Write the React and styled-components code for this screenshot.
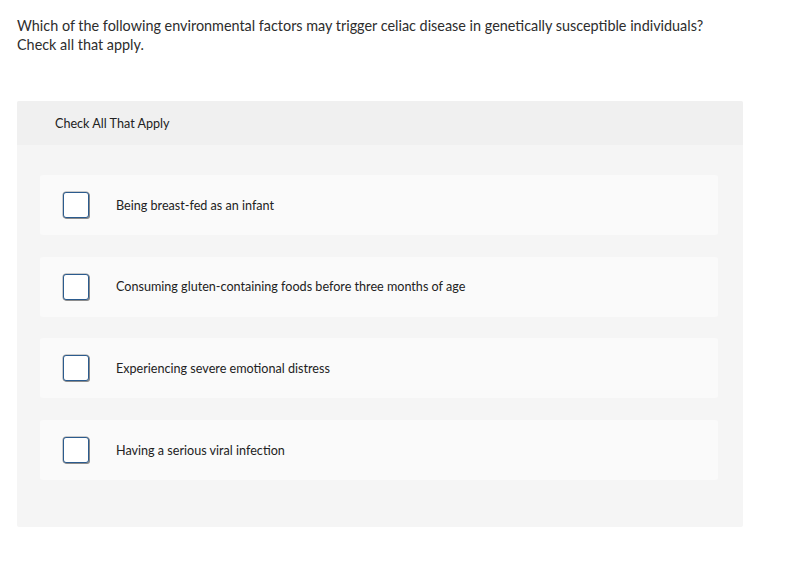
import styled, { createGlobalStyle } from "styled-components";

const GlobalStyle = createGlobalStyle`
  html, body {
    margin: 0;
    padding: 0;
    background: #ffffff;
  }
  body {
    font-family: Lato, "Liberation Sans", sans-serif;
    color: #333333;
  }
`;

const choices = [
    { id: 1, text: "Being breast-fed as an infant" },
    { id: 2, text: "Consuming gluten-containing foods before three months of age" },
    { id: 3, text: "Experiencing severe emotional distress" },
    { id: 4, text: "Having a serious viral infection" },
];

const App = () => {
    return (
        <>
            <GlobalStyle />
            <Page>
                <Prompt>
                    Which of the following environmental factors may trigger celiac disease in genetically susceptible individuals?
                    <br />
                    Check all that apply.
                </Prompt>

                <Panel>
                    <PanelHeader>Check All That Apply</PanelHeader>
                    <ChoiceList>
                        {choices.map((item) => (
                            <Choice key={item.id}>
                                <Box />
                                <Label>{item.text}</Label>
                            </Choice>
                        ))}
                    </ChoiceList>
                </Panel>
            </Page>
        </>
    );
};

const Page = styled.div`
    width: 785px;
    padding: 16px 0 0 17px;
    box-sizing: border-box;
`;

const Prompt = styled.p`
    margin: 0;
    font-size: 14.4px;
    line-height: 19px;
    color: #2d2d2d;
    white-space: nowrap;
`;

const Panel = styled.div`
    margin-top: 47px;
    width: 726px;
    height: 426px;
    background: #f5f5f5;
    border-radius: 2px;
    overflow: hidden;
`;

const PanelHeader = styled.div`
    height: 44px;
    display: flex;
    align-items: center;
    padding-left: 38px;
    background: #f0f0f0;
    font-size: 12.6px;
    color: #222222;
`;

const ChoiceList = styled.div`
    display: flex;
    flex-direction: column;
    gap: 21.7px;
    padding: 30px 25px 0 23px;
`;

const Choice = styled.div`
    height: 60px;
    display: flex;
    align-items: center;
    padding-left: 23px;
    background: #fafafa;
    border-radius: 3px;
`;

const Box = styled.div`
    width: 26px;
    height: 26px;
    box-sizing: border-box;
    background: #ffffff;
    border: 1.5px solid #2b5b8e;
    border-radius: 3px;
    box-shadow: 1px 1px 0 #8c8c8c, 0 0 0 0.5px #9a9a9a;
    flex-shrink: 0;
`;

const Label = styled.span`
    margin-left: 27px;
    font-size: 12.6px;
    color: #222222;
`;

export default App;
